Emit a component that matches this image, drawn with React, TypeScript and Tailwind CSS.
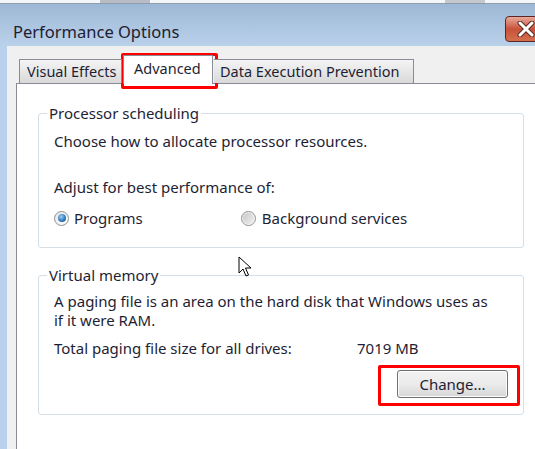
import React from 'react';

const font = { fontFamily: '"Noto Sans", "Open Sans", sans-serif' };

const Radio: React.FC<{ checked?: boolean }> = ({ checked }) => (
  <span className="relative flex h-[15px] w-[15px] shrink-0 items-center justify-center rounded-full border border-[#8e8f8f] bg-gradient-to-br from-[#e6e6e6] via-[#f4f4f4] to-[#fdfdfd]">
    {checked ? (
      <span className="h-[8px] w-[8px] rounded-full bg-[radial-gradient(circle_at_40%_35%,#9fd0f5,#2a76b8_60%,#164e86)]" />
    ) : (
      <span className="h-[11px] w-[11px] rounded-full bg-gradient-to-br from-[#c8c8c8] to-[#f0f0f0]" />
    )}
  </span>
);

const GroupBox: React.FC<{ title: string; className?: string; children: React.ReactNode }> = ({ title, className, children }) => (
  <div className={`relative rounded-[3px] border border-[#d5dfe5] ${className ?? ''}`}>
    <span className="absolute left-[8px] top-[-11px] bg-white px-[2px] leading-[20px]">{title}</span>
    {children}
  </div>
);

export default function App() {
  return (
    <div
      className="relative h-[449px] w-[535px] overflow-hidden bg-[#b9d1ea] text-[15px] text-[#1e1e34]"
      style={font}
    >
      {/* strip of the window behind */}
      <div className="flex h-[4px] border-b border-[#8c9db0] bg-[#f4f6f8]">
        <div className="ml-[100px] h-full w-[50px] bg-[#b8bcc4]" />
        <div className="ml-auto mr-[50px] h-full w-[40px] bg-[#c4c8ce]" />
      </div>

      {/* title bar */}
      <div className="flex h-[42px] items-start bg-gradient-to-b from-[#9db8d5] to-[#bad1ea]">
        <span className="ml-[13px] mt-[17px] text-[16.5px] leading-[22px] text-[#1c2030]">Performance Options</span>
        <div className="ml-auto mr-[-12px] mt-[12px] flex h-[26px] w-[42px] items-center justify-center rounded-[4px] border border-[#5a2626] bg-gradient-to-b from-[#e9a99a] via-[#c8513a] to-[#d4704e]">
          <svg width="18" height="16" viewBox="0 0 18 16">
            <path d="M3 2 L15 14 M15 2 L3 14" stroke="#5a2a22" strokeWidth="5" strokeLinecap="round" />
            <path d="M3 2 L15 14 M15 2 L3 14" stroke="#ffffff" strokeWidth="3" strokeLinecap="round" />
          </svg>
        </div>
      </div>

      {/* dialog body */}
      <div className="ml-[7px] flex h-[403px] flex-col bg-[#f0f0f0] pl-[9px] pt-[12px]">
        {/* tabs */}
        <div className="relative z-10 flex h-[25px] items-end text-[14.5px]">
          <div className="ml-[3px] flex h-[24px] w-[103px] items-center border border-b-0 border-[#898c95] bg-gradient-to-b from-[#f4f4f4] to-[#d9d9d9] pl-[7px]">
            Visual Effects
          </div>
          <div className="mb-[-1px] ml-[1px] flex h-[29px] w-[90px] items-start border border-b-0 border-[#898c95] bg-white pl-[10px] pt-[2px]">
            Advanced
          </div>
          <div className="ml-[1px] flex h-[24px] w-[200px] items-center border border-b-0 border-l-0 border-[#898c95] bg-gradient-to-b from-[#f4f4f4] to-[#d9d9d9] pl-[6px]">
            Data Execution Prevention
          </div>
        </div>

        {/* tab panel */}
        <div className="flex flex-1 flex-col border-l border-t border-[#898c95] bg-white pl-[21px] pt-[29px]">
          <GroupBox title="Processor scheduling" className="h-[135px] w-[486px] pl-[15px] pt-[17px]">
            <div className="leading-[20px]">Choose how to allocate processor resources.</div>
            <div className="mt-[26px] leading-[20px]">Adjust for best performance of:</div>
            <div className="mt-[11px] flex items-center leading-[20px]">
              <Radio checked />
              <span className="ml-[5px]">Programs</span>
              <span className="ml-[98px]">
                <Radio />
              </span>
              <span className="ml-[6px]">Background services</span>
            </div>
          </GroupBox>

          <GroupBox title="Virtual memory" className="mt-[27px] h-[140px] w-[486px] pl-[15px] pt-[16px]">
            <div className="w-[440px] leading-[19px]">
              A paging file is an area on the hard disk that Windows uses as if it were RAM.
            </div>
            <div className="mt-[8px] flex leading-[20px]">
              <span className="w-[303px]">Total paging file size for all drives:</span>
              <span>7019 MB</span>
            </div>
            <div className="mt-[12px] flex justify-end pr-[15px]">
              <button className="h-[28px] w-[111px] rounded-[3px] border border-[#707070] bg-gradient-to-b from-[#f2f2f2] via-[#ebebeb] to-[#d6d6d6] text-[#1e1e34] shadow-[inset_0_0_0_1px_#fcfcfc]">
                Change...
              </button>
            </div>
          </GroupBox>
        </div>
      </div>

      {/* red highlight boxes */}
      <div className="pointer-events-none absolute left-[121px] top-[53px] h-[36px] w-[97px] rounded-[2px] border-[3px] border-[#ff0000]" />
      <div className="pointer-events-none absolute left-[378px] top-[365px] h-[41px] w-[142px] rounded-[2px] border-[3px] border-[#ff0000]" />

      {/* mouse pointer */}
      <svg className="absolute left-[238px] top-[256px]" width="14" height="22" viewBox="0 0 14 22">
        <path d="M1 1 L1 17 L5 13 L8 20 L10.5 19 L7.5 12 L13 12 Z" fill="#ffffff" stroke="#000000" strokeWidth="1" strokeLinejoin="round" />
      </svg>
    </div>
  );
}
